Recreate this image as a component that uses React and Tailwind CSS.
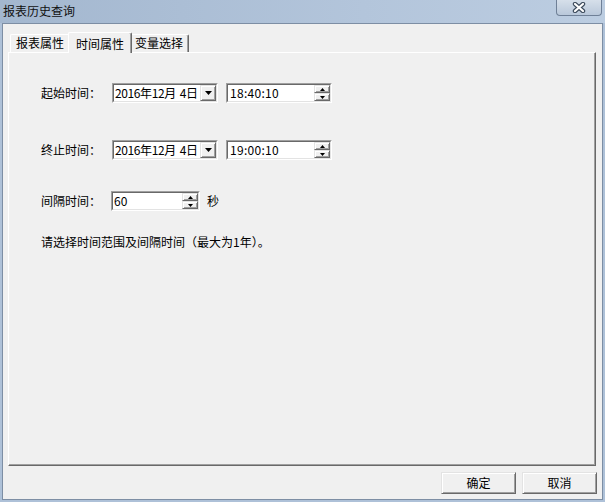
import React from "react";

const FONT = { fontFamily: '"Noto Sans CJK SC", "Liberation Sans", sans-serif' };

function DownArrow() {
  return (
    <svg width="7" height="4" viewBox="0 0 7 4">
      <path d="M0 0H7L3.5 4Z" fill="#000" />
    </svg>
  );
}

function SpinArrow({ up }) {
  return (
    <svg width="5" height="3" viewBox="0 0 5 3">
      {up ? <path d="M0 3H5L2.5 0Z" fill="#000" /> : <path d="M0 0H5L2.5 3Z" fill="#000" />}
    </svg>
  );
}

function Raised({ className, children }) {
  return (
    <div
      className={
        "flex items-center justify-center bg-[#f0f0f0] border border-t-[#e3e3e3] border-l-[#e3e3e3] border-r-[#696969] border-b-[#696969] shadow-[inset_1px_1px_#ffffff,inset_-1px_-1px_#a0a0a0] " +
        className
      }
    >
      {children}
    </div>
  );
}

function Sunken({ className, children }) {
  return (
    <div
      className={
        "flex h-[20px] border border-t-[#a0a0a0] border-l-[#a0a0a0] border-r-white border-b-white " +
        className
      }
    >
      <div className="flex min-w-0 flex-1 border border-t-[#696969] border-l-[#696969] border-r-[#e3e3e3] border-b-[#e3e3e3] bg-white">
        {children}
      </div>
    </div>
  );
}

function Spinner() {
  return (
    <div className="flex w-[16px] shrink-0 flex-col">
      <Raised className="h-[8px] w-[16px]">
        <SpinArrow up />
      </Raised>
      <Raised className="h-[8px] w-[16px]">
        <SpinArrow />
      </Raised>
    </div>
  );
}

function DateBox() {
  return (
    <Sunken className="w-[106px]">
      <div className="flex min-w-0 flex-1 items-center overflow-hidden whitespace-nowrap pl-[1px] text-[12px] leading-none tracking-[-0.4px] text-black">
        <span>2016年12月</span>
        <span className="ml-[4px]">4日</span>
      </div>
      <Raised className="h-[16px] w-[16px] shrink-0">
        <DownArrow />
      </Raised>
    </Sunken>
  );
}

function TimeBox({ text }) {
  return (
    <Sunken className="w-[106px]">
      <div className="flex flex-1 items-center whitespace-nowrap pl-[2px] text-[12px] leading-none tracking-[0.3px] text-black">
        {text}
      </div>
      <Spinner />
    </Sunken>
  );
}

export default function App() {
  return (
    <div
      className="flex h-[502px] w-[605px] flex-col bg-[#aec1d8] text-[12px] text-black"
      style={FONT}
    >
      {/* title bar */}
      <div className="relative flex h-[23px] items-center bg-[linear-gradient(to_right,#a3b7cf,#b3c5db_60%,#bccde1)] pl-[3px] pb-[1px]">
        <span className="text-[12px] leading-none text-[#111]">报表历史查询</span>
        <div className="absolute right-[3px] top-0 flex h-[16px] w-[46px] items-center justify-center rounded-b-[4px] border border-t-0 border-[#6f8097] bg-[linear-gradient(to_bottom,#d6dfea,#b9c8da)]">
          <svg width="14" height="11" viewBox="0 0 14 11">
            <path d="M3 2L11 9M11 2L3 9" stroke="#3d4b5c" strokeWidth="4.4" strokeLinecap="round" />
            <path d="M3 2L11 9M11 2L3 9" stroke="#ffffff" strokeWidth="2.2" strokeLinecap="round" />
          </svg>
        </div>
      </div>

      {/* client area */}
      <div className="mx-[2px] mb-[2px] flex flex-1 flex-col border border-[#7d8ea4] bg-[#f0f0f0]">
        {/* tabs */}
        <div className="flex h-[28px] items-end pl-[7px]">
          <div className="flex h-[18px] w-[60px] items-center justify-center rounded-t-[2px] border-l border-t border-l-white border-t-white border-r border-r-[#a0a0a0] pb-[1px]">
            报表属性
          </div>
          <div className="relative z-10 -mb-[1px] -ml-[2px] -mr-[2px] flex h-[21px] w-[64px] items-start justify-center rounded-t-[2px] border-l border-t border-l-white border-t-white border-r border-r-[#696969] bg-[#f0f0f0] pt-[2px] shadow-[inset_-1px_0_#a0a0a0]">
            时间属性
          </div>
          <div className="flex h-[18px] w-[59px] items-center justify-center rounded-t-[2px] border-t border-t-white border-r border-r-[#696969] pb-[1px] shadow-[inset_-1px_0_#a0a0a0]">
            变量选择
          </div>
        </div>

        {/* panel */}
        <div className="ml-[5px] flex h-[414px] w-[588px] flex-col border border-t-white border-l-white border-r-[#696969] border-b-[#696969] pl-[32px] pt-[30px] shadow-[inset_-1px_-1px_#a0a0a0]">
          <div className="flex items-center">
            <span className="w-[71px]">起始时间：</span>
            <DateBox />
            <div className="w-[8px]" />
            <TimeBox text="18:40:10" />
          </div>
          <div className="mt-[37px] flex items-center">
            <span className="w-[71px]">终止时间：</span>
            <DateBox />
            <div className="w-[8px]" />
            <TimeBox text="19:00:10" />
          </div>
          <div className="mt-[31px] flex items-center">
            <span className="w-[70px]">间隔时间：</span>
            <Sunken className="w-[89px]">
              <div className="flex flex-1 items-center pl-[1px] text-[12px] leading-none">60</div>
              <Spinner />
            </Sunken>
            <span className="ml-[7px]">秒</span>
          </div>
          <div className="mt-[22px]">请选择时间范围及间隔时间（最大为1年）。</div>
        </div>

        {/* buttons */}
        <div className="flex justify-end gap-[6px] pr-[5px] pt-[6px]">
          <Raised className="h-[22px] w-[75px] pb-[1px]">确定</Raised>
          <Raised className="h-[22px] w-[75px] pb-[1px]">取消</Raised>
        </div>
      </div>
    </div>
  );
}
